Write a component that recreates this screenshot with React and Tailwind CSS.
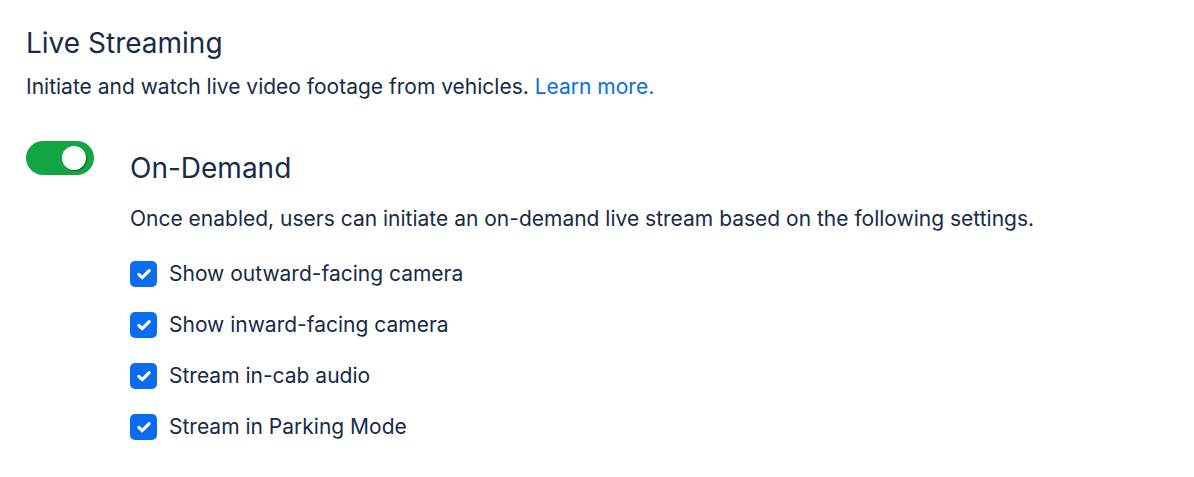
import React, { useState } from 'react';

const CheckIcon = () => (
    <svg viewBox="0 0 16 16" className="w-[18px] h-[18px]" fill="none" stroke="white" strokeWidth={2.8} strokeLinecap="round" strokeLinejoin="round">
        <path d="M3.4 8.4l3 2.9L12.6 5" />
    </svg>
);

const options = [
    'Show outward-facing camera',
    'Show inward-facing camera',
    'Stream in-cab audio',
    'Stream in Parking Mode',
];

export default function App() {
    const [enabled, setEnabled] = useState(true);
    const [checked, setChecked] = useState([true, true, true, true]);

    return (
        <div className="w-[1194px] h-[477px] bg-white text-[#172a48] font-['Inter',sans-serif] px-[26px] pt-[24px]">
            <h1 className="text-[28px] leading-[38px]">Live Streaming</h1>
            <p className="text-[21px] leading-[30px] mt-[10px]">
                Initiate and watch live video footage from vehicles.{' '}
                <a href="#" className="text-[#0b6be8]">Learn more.</a>
            </p>

            <div className="flex mt-[39px]">
                <button
                    onClick={() => setEnabled(!enabled)}
                    className={`w-[68px] h-[34px] rounded-full flex items-center px-[8px] shrink-0 ${enabled ? 'bg-[#13a544] justify-end' : 'bg-gray-300 justify-start'}`}
                >
                    <span className="w-[24px] h-[24px] rounded-full bg-white shadow-[1px_1px_1px_rgba(0,0,0,0.4)]"></span>
                </button>

                <div className="ml-[36px]">
                    <h2 className="text-[28px] leading-[38px] mt-[8px]">On-Demand</h2>
                    <p className="text-[21px] leading-[30px] mt-[17px]">
                        Once enabled, users can initiate an on-demand live stream based on the following settings.
                    </p>
                    <div className="flex flex-col gap-[25px] mt-[27px]">
                        {options.map((label, i) => (
                            <label key={label} className="flex items-center gap-[12px] h-[26px] cursor-pointer">
                                <span
                                    onClick={() => setChecked(checked.map((c, j) => (j === i ? !c : c)))}
                                    className={`w-[27px] h-[26px] rounded-[5px] flex items-center justify-center ${checked[i] ? 'bg-[#0b6cf0]' : 'border-2 border-gray-400'}`}
                                >
                                    {checked[i] && <CheckIcon />}
                                </span>
                                <span className="text-[21px] leading-[30px]">{label}</span>
                            </label>
                        ))}
                    </div>
                </div>
            </div>
        </div>
    );
}
